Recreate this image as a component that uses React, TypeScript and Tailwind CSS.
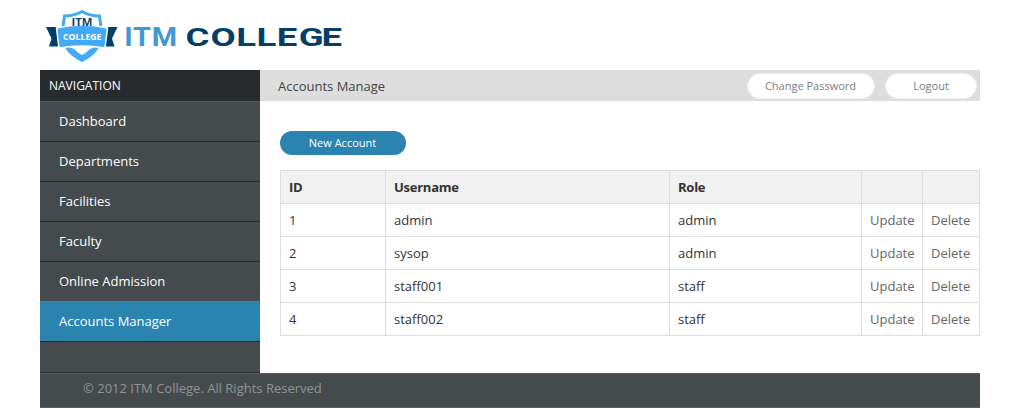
const navItems = ["Dashboard", "Departments", "Facilities", "Faculty", "Online Admission", "Accounts Manager"];

const accounts = [
  { id: 1, username: "admin", role: "admin" },
  { id: 2, username: "sysop", role: "admin" },
  { id: 3, username: "staff001", role: "staff" },
  { id: 4, username: "staff002", role: "staff" },
];

function Logo() {
  return (
    <svg width="310" height="70" viewBox="40 0 310 70" role="img" aria-label="ITM College">
      <path d="M46 27h11.500l3 19.500H49l2.500-8zM117.500 27H106l-3 19.500h11.500l-2.500-8z" fill="#053f68" />
      <path d="M82 11.500q-8 4.500-17.500 4.500-1.500 8-1.500 16 0 20 19 28 19-8 19-28 0-8-1.500-16Q90 16 82 11.500z" fill="#fff" stroke="#42aaf6" strokeWidth="3" />
      <path d="M66 46q5 10 16 16 11-6 16-16l-8 3q-4 4-8 6-4-2-8-6z" fill="#42aaf6" />
      <path d="M56.500 28q25.500-6 51 0l-2.500 20q-23-4-46 0z" fill="#42aaf6" stroke="#fff" strokeWidth="1.5" />
      <text x="71.500" y="26" textLength="21" lengthAdjust="spacingAndGlyphs" fontSize="10" fontWeight="700" fill="#164464">ITM</text>
      <text x="63" y="40.300" textLength="38.500" lengthAdjust="spacingAndGlyphs" fontSize="9" fontWeight="700" fill="#fff">COLLEGE</text>
      <g fontFamily="Roboto, sans-serif" fontWeight="700" fontSize="26.5">
        <text transform="translate(124.200 45.900) scale(1.09 1)" x="0 8 25.300" fill="#4298d5">ITM</text>
        <text transform="translate(185.500 45.900) scale(1.38 1)" x="0 18.200 36.800 51.500 66.200 82 98.600" fill="#053f68">COLLEGE</text>
      </g>
    </svg>
  );
}

export default function App() {
  return (
    <div className="h-[408px] w-[1020px] overflow-hidden bg-white px-10 font-['Open_Sans',sans-serif] text-[13px] text-[#333]">
      <header className="h-[70px]">
        <Logo />
      </header>
      <div className="flex h-[303px]">
        <aside className="flex w-[220px] flex-col border-b border-[#2b3033] bg-[#454a4d] text-white">
          <h2 className="h-[31px] bg-[#272b2e] pl-[9px] text-[12px] leading-[31px]">NAVIGATION</h2>
          <ul className="border-b border-[#272b2e]">
            {navItems.map((item) => (
              <li
                key={item}
                className="h-10 border-t border-[#272b2e] pl-[19px] leading-[39px] first:border-[#53575a] last:border-[#2b84af] last:bg-[#2b84af]"
              >
                {item}
              </li>
            ))}
          </ul>
        </aside>
        <main className="w-[720px]">
          <div className="flex h-[31px] items-center bg-[#ddd] pl-[18px] pr-[3px]">
            <h1 className="mr-auto pt-0.5 text-[13px] text-[#444]">Accounts Manage</h1>
            <button className="h-[26px] w-[128px] rounded-full border border-[#eee] bg-white pr-px pt-0.5 text-[11px] text-[#777c85]">Change Password</button>
            <button className="ml-2.5 h-[26px] w-[92px] rounded-full border border-[#eee] bg-white pt-0.5 text-[11px] text-[#777c85]">Logout</button>
          </div>
          <div className="pl-5 pt-[29px]">
            <div className="flex h-[26px] items-center">
              <button className="h-6 w-[126px] rounded-full bg-[#2b84af] pr-px text-[11px] text-white">New Account</button>
            </div>
            <table className="mt-3.5 w-[700px] table-fixed border-separate border-spacing-0 border-l border-t border-[#ddd] text-left">
              <colgroup>
                <col className="w-[105px]" />
                <col className="w-[284px]" />
                <col className="w-[192px]" />
                <col className="w-[61px]" />
                <col className="w-[57px]" />
              </colgroup>
              <thead>
                <tr className="h-[33px] bg-[#f1f1f1] tracking-[-0.25px] *:border-b *:border-r *:border-[#ddd] *:px-2 *:pb-0 *:pt-0.5">
                  <th>ID</th>
                  <th>Username</th>
                  <th>Role</th>
                  <th />
                  <th />
                </tr>
              </thead>
              <tbody>
                {accounts.map((account) => (
                  <tr key={account.id} className="h-[33px] *:border-b *:border-r *:border-[#ddd] *:px-2 *:pb-0 *:pt-0.5">
                    <td>{account.id}</td>
                    <td>{account.username}</td>
                    <td>{account.role}</td>
                    <td className="text-[#666]">Update</td>
                    <td className="text-[#666]">Delete</td>
                  </tr>
                ))}
              </tbody>
            </table>
          </div>
        </main>
      </div>
      <footer className="h-[35px] border-y border-[#575b5e] bg-[#454a4d] pl-[43px] text-[13px] leading-[29px] text-[#929495]">
        © 2012 ITM College. All Rights Reserved
      </footer>
    </div>
  );
}
